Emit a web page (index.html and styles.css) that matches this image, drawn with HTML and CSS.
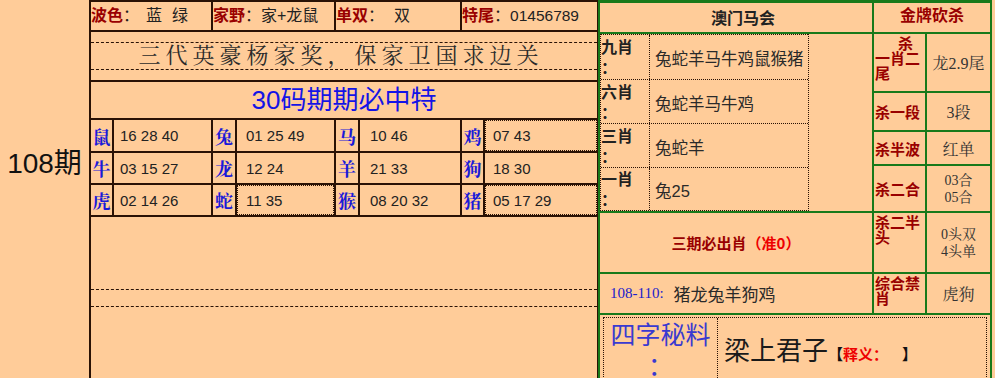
FILE: index.html
```html
<!DOCTYPE html>
<html lang="zh-CN">
<head>
<meta charset="utf-8">
<title>108期</title>
<link rel="stylesheet" href="styles.css">
</head>
<body>
<div class="page">
  <div class="issue">108期</div>

  <div class="mid">
    <div class="info">
      <div><span class="lab">波色</span>：<span class="g7"></span>蓝<span class="g10"></span>绿</div>
      <div><span class="lab">家野</span>：家+龙鼠</div>
      <div><span class="lab">单双</span>：<span class="g10"></span>双</div>
      <div><span class="lab">特尾</span>：<span class="num">01456789</span></div>
    </div>
    <div class="slogan"><div class="slogan-text">三代英豪杨家奖，保家卫国求边关</div></div>
    <div class="title">30码期期必中特</div>
    <div class="zodiac">
      <div class="an">鼠</div><div class="nums">16 28 40</div>
      <div class="an">兔</div><div class="nums">01 25 49</div>
      <div class="an">马</div><div class="nums">10 46</div>
      <div class="an">鸡</div><div class="nums dot">07 43</div>
      <div class="an">牛</div><div class="nums">03 15 27</div>
      <div class="an">龙</div><div class="nums">12 24</div>
      <div class="an">羊</div><div class="nums">21 33</div>
      <div class="an">狗</div><div class="nums">18 30</div>
      <div class="an">虎</div><div class="nums">02 14 26</div>
      <div class="an">蛇</div><div class="nums dot">11 35</div>
      <div class="an">猴</div><div class="nums">08 20 32</div>
      <div class="an">猪</div><div class="nums dot">05 17 29</div>
    </div>
    <div class="blank"><div class="dash"></div></div>
  </div>

  <div class="right">
    <div class="h1">澳门马会</div>
    <div class="h2">金牌砍杀</div>

    <div class="list-cell">
      <div class="list">
        <div class="lrow r1"><div class="lk">九肖<br>：</div><div class="lv">兔蛇羊马牛鸡鼠猴猪</div></div>
        <div class="lrow r2"><div class="lk">六肖<br>：</div><div class="lv">兔蛇羊马牛鸡</div></div>
        <div class="lrow r3"><div class="lk">三肖<br>：</div><div class="lv">兔蛇羊</div></div>
        <div class="lrow r4"><div class="lk">一肖<br>：</div><div class="lv">兔25</div></div>
      </div>
    </div>

    <div class="k multi"><div class="ind">杀</div><div>一肖二</div><div>尾</div></div>
    <div class="v">龙2.9尾</div>
    <div class="k">杀一段</div>
    <div class="v">3段</div>
    <div class="k">杀半波</div>
    <div class="v">红单</div>
    <div class="k">杀二合</div>
    <div class="v two">03合<br>05合</div>

    <div class="must">三期必出肖<span class="red">（准0）</span></div>
    <div class="k top">杀二半头</div>
    <div class="v two">0头双<br>4头单</div>

    <div class="range"><span class="rnum">108-110:</span> 猪龙兔羊狗鸡</div>
    <div class="k top">综合禁肖</div>
    <div class="v">虎狗</div>

    <div class="secret-cell">
      <div class="secret">
        <div class="sk">四字秘料<br>：</div>
        <div class="sv"><span class="word">梁上君子</span><span class="note">【<span class="red">释义：</span><span class="g14"></span>】</span></div>
      </div>
    </div>
  </div>
</div>
</body>
</html>
```

FILE: styles.css
```css
* { box-sizing: border-box; margin: 0; padding: 0; }

html, body {
  width: 995px;
  height: 378px;
  overflow: hidden;
  background: #ffcc99;
}

body {
  font-family: "Liberation Sans", "Noto Sans CJK SC", sans-serif;
  color: #222;
}

.page {
  display: flex;
  height: 378px;
}

/* left issue column */
.issue {
  flex: none;
  width: 89px;
  padding-top: 147px;
  text-align: center;
  font-size: 28px;
  line-height: 34px;
  color: #111;
}

/* middle column */
.mid {
  flex: none;
  width: 509px;
  border-top: 2px solid #2a1205;
  border-left: 2px solid #2a1205;
  border-right: 1px solid #2a1205;
  display: flex;
  flex-direction: column;
}

.info {
  display: grid;
  grid-template-columns: 120px 121px 124px 135px;
  column-gap: 2px;
  background: #2a1205;
  height: 30px;
  border-bottom: 2px solid #2a1205;
}

.info > div {
  background: #ffcc99;
  font-size: 16px;
  line-height: 28px;
  white-space: nowrap;
  overflow: hidden;
}

.lab { color: #990000; font-weight: bold; }
.num { font-size: 15.5px; }
.g7 { display: inline-block; width: 7px; }
.g10 { display: inline-block; width: 10px; }
.g14 { display: inline-block; width: 14px; }

.slogan {
  height: 50px;
  padding-top: 10px;
  border-bottom: 2px solid #2a1205;
}

.slogan-text {
  height: 28px;
  border-top: 1px dashed #2a1205;
  border-bottom: 1px dashed #2a1205;
  text-align: center;
  padding-right: 6px;
  font-family: "Liberation Serif", "Noto Serif CJK SC", "Noto Sans CJK SC", serif;
  font-size: 22px;
  line-height: 26px;
  letter-spacing: 5px;
  color: #2a2a2a;
}

.title {
  height: 38px;
  border-bottom: 2px solid #2a1205;
  text-align: center;
  font-size: 26px;
  line-height: 36px;
  color: #1414e6;
}

.zodiac {
  display: grid;
  grid-template-columns: 21px 97px 22px 97px 22px 100px 21px 112px;
  grid-template-rows: 31px 30px 30px;
  gap: 2px;
  padding-bottom: 2px;
  background: #2a1205;
}

.zodiac > div {
  background: #ffcc99;
  display: flex;
  align-items: center;
}

.an {
  justify-content: center;
  font-family: "Noto Serif CJK SC", "Noto Sans CJK SC", serif;
  font-weight: bold;
  font-size: 18px;
  color: #1a1ad8;
}

.nums {
  font-size: 15px;
  color: #222;
  padding-left: 8px;
}

.zodiac > div:nth-child(8n+2) { padding-left: 6px; }
.zodiac > div:nth-child(8n+4) { padding-left: 9px; }
.zodiac > div:nth-child(8n+6) { padding-left: 10px; }
.zodiac > div:nth-child(8n+8) { padding-left: 8px; }

.dot {
  outline: 1px dotted #2a1205;
  outline-offset: -1px;
}

.blank {
  flex: 1;
  padding-top: 72px;
}

.dash {
  height: 18px;
  border-top: 1px dashed #2a1205;
  border-bottom: 1px dashed #2a1205;
}

/* right panel */
.right {
  flex: none;
  width: 394px;
  display: grid;
  grid-template-columns: 272px 51px 63px;
  grid-template-rows: 29px 57px 37px 32px 45px 59px 39px 80px;
  gap: 2px;
  padding: 3px 2px 0;
  background: #18791a;
  align-content: start;
}

.right > div { background: #ffcc99; }

.h1 {
  text-align: center;
  padding-left: 14px;
  font-family: "Noto Sans CJK SC", sans-serif;
  font-weight: bold;
  font-size: 16px;
  line-height: 29px;
  color: #222;
}

.h2 {
  grid-column: 2 / 4;
  text-align: center;
  font-family: "Noto Sans CJK SC", sans-serif;
  font-weight: bold;
  font-size: 16px;
  line-height: 22px;
  color: #990000;
}

.list-cell { grid-row: 2 / 6; }

.list {
  width: 209px;
  border-left: 1px dotted #2a1205;
  border-right: 1px dotted #2a1205;
  border-bottom: 1px dotted #2a1205;
}

.lrow {
  display: flex;
  border-top: 1px dotted #2a1205;
}
.r1 { height: 45px; }
.r2 { height: 44px; }
.r3 { height: 44px; }
.r4 { height: 43px; }

.lk {
  flex: none;
  width: 49px;
  border-right: 1px dotted #2a1205;
  display: flex;
  align-items: center;
  font-family: "Noto Sans CJK SC", sans-serif;
  font-weight: bold;
  font-size: 16px;
  line-height: 21px;
  color: #222;
}

.lv {
  flex: 1;
  display: flex;
  align-items: center;
  padding-left: 5px;
  padding-top: 2px;
  font-size: 16.5px;
  white-space: nowrap;
  color: #2a2a2a;
}

.k {
  display: flex;
  align-items: center;
  padding-left: 1px;
  font-family: "Noto Sans CJK SC", sans-serif;
  font-weight: bold;
  font-size: 15px;
  line-height: 15px;
  color: #990000;
}

.k.multi {
  flex-direction: column;
  align-items: flex-start;
  padding-top: 1px;
}

.ind { padding-left: 23px; }

.k.top {
  align-items: flex-start;
  padding-top: 1px;
}

.v {
  display: flex;
  align-items: center;
  justify-content: center;
  text-align: center;
  font-family: "Liberation Serif", "Noto Serif CJK SC", "Noto Sans CJK SC", serif;
  font-size: 16px;
  color: #333;
}

.v.two {
  font-size: 14px;
  line-height: 17px;
}

.must {
  display: flex;
  align-items: center;
  justify-content: center;
  font-family: "Noto Sans CJK SC", sans-serif;
  font-weight: bold;
  font-size: 15px;
  color: #990000;
}

.red { color: #ee0000; }

.range {
  display: flex;
  align-items: center;
  padding-left: 10px;
  font-size: 17px;
  color: #2a2a2a;
}

.rnum {
  font-family: "Liberation Serif", serif;
  font-size: 15px;
  color: #2020cc;
  margin-right: 10px;
}

.secret-cell {
  grid-column: 1 / 4;
  padding: 2px 3px 0;
}

.secret {
  display: flex;
  height: 100px;
  border: 1px dotted #2a1205;
}

.sk {
  width: 114px;
  border-right: 1px dotted #2a1205;
  text-align: center;
  font-family: "Noto Sans CJK SC", sans-serif;
  font-size: 25px;
  line-height: 31px;
  color: #3a3ad0;
}

.sv {
  flex: 1;
  padding-left: 6px;
  padding-top: 14px;
  white-space: nowrap;
}

.word {
  font-family: "Noto Sans CJK SC", sans-serif;
  font-size: 26px;
  line-height: 34px;
  color: #1a1a1a;
}

.note {
  font-family: "Noto Sans CJK SC", sans-serif;
  font-weight: bold;
  font-size: 15px;
  color: #111;
}
```
